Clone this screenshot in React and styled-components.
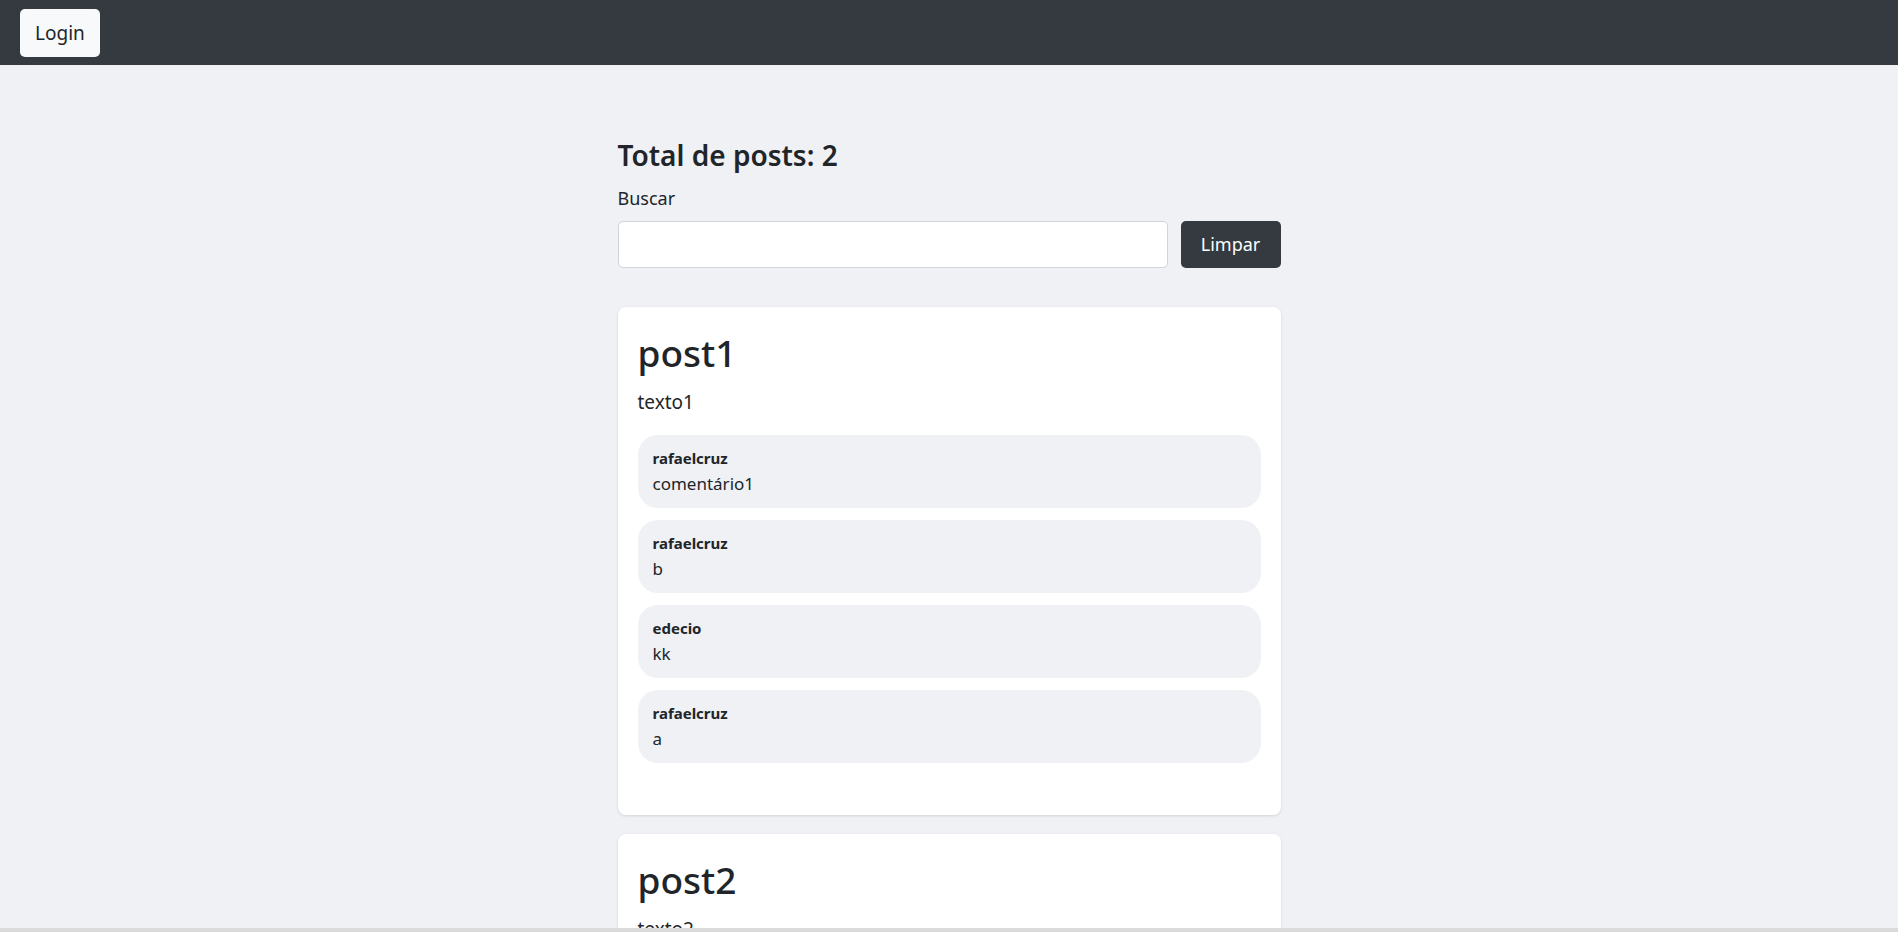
import React, { useState } from 'react'
import styled, { createGlobalStyle } from 'styled-components'

const posts = [
    {
        id: 1,
        title: 'post1',
        text: 'texto1',
        comments: [
            { user: 'rafaelcruz', body: 'comentário1' },
            { user: 'rafaelcruz', body: 'b' },
            { user: 'edecio', body: 'kk' },
            { user: 'rafaelcruz', body: 'a' },
        ],
    },
    { id: 2, title: 'post2', text: 'texto2', comments: [] },
]

const App = () => {
    const [search, setSearch] = useState('')

    return (
        <>
            <GlobalStyle />
            <Navbar>
                <LoginButton>Login</LoginButton>
            </Navbar>
            <Main>
                <Total>Total de posts: {posts.length}</Total>
                <Label htmlFor="busca">Buscar</Label>
                <SearchRow>
                    <SearchInput id="busca" value={search} onChange={e => setSearch(e.target.value)} />
                    <ClearButton onClick={() => setSearch('')}>Limpar</ClearButton>
                </SearchRow>
                <PostList>
                    {posts.map(post => (
                        <Card key={post.id}>
                            <PostTitle>{post.title}</PostTitle>
                            <PostText>{post.text}</PostText>
                            <Comments>
                                {post.comments.map((c, i) => (
                                    <Comment key={i}>
                                        <Author>{c.user}</Author>
                                        <CommentText>{c.body}</CommentText>
                                    </Comment>
                                ))}
                            </Comments>
                        </Card>
                    ))}
                </PostList>
            </Main>
            <ScrollStrip />
        </>
    )
}

const GlobalStyle = createGlobalStyle`
    * {
        box-sizing: border-box;
    }
    body {
        margin: 0;
        background: #eff1f5;
        color: #212529;
        font-family: "Noto Sans", "Open Sans", sans-serif;
        font-size: 16px;
        line-height: 1.5;
    }
`;

const Navbar = styled.nav`
    height: 65px;
    background: #343a40;
    display: flex;
    align-items: center;
    padding: 0 20px;
`;

const LoginButton = styled.button`
    height: 48px;
    padding: 0 15px;
    border: none;
    border-radius: 5px;
    background: #f8f9fa;
    color: #212529;
    font-family: inherit;
    font-size: 19px;
`;

const Main = styled.main`
    width: 663px;
    margin: 0 auto;
    padding-top: 74px;
`;

const Total = styled.h4`
    margin: 0 0 12px;
    font-size: 28px;
    font-weight: 600;
    line-height: 1.2;
`;

const Label = styled.label`
    display: block;
    margin-bottom: 10px;
    font-size: 18px;
    line-height: 26px;
`;

const SearchRow = styled.div`
    display: flex;
    gap: 13px;
`;

const SearchInput = styled.input`
    flex: 1;
    height: 47px;
    border: 1px solid #ced4da;
    border-radius: 5px;
    background: #fff;
    padding: 0 16px;
    font-family: inherit;
    font-size: 18px;
`;

const ClearButton = styled.button`
    width: 100px;
    height: 47px;
    border: none;
    border-radius: 5px;
    background: #343a40;
    color: #fff;
    font-family: inherit;
    font-size: 18px;
`;

const PostList = styled.div`
    display: flex;
    flex-direction: column;
    gap: 19px;
    margin-top: 39px;
`;

const Card = styled.div`
    background: #fff;
    border-radius: 8px;
    box-shadow: 0 1px 3px rgba(0, 0, 0, 0.12);
    padding: 22px 20px 52px;
`;

const PostTitle = styled.h1`
    margin: 0 0 12px;
    font-size: 37px;
    font-weight: 500;
    line-height: 48px;
`;

const PostText = styled.p`
    margin: 0 0 20px;
    font-size: 19px;
    line-height: 26px;
`;

const Comments = styled.div`
    display: flex;
    flex-direction: column;
    gap: 12px;
`;

const Comment = styled.div`
    background: #eff1f5;
    border-radius: 20px;
    padding: 13px 15px 12px;
`;

const Author = styled.div`
    font-size: 15px;
    font-weight: 700;
    line-height: 21px;
    margin-bottom: 3px;
`;

const CommentText = styled.div`
    font-size: 17px;
    line-height: 24px;
`;

const ScrollStrip = styled.div`
    position: fixed;
    left: 0;
    right: 0;
    bottom: 0;
    height: 4px;
    background: #dadada;
`;

export default App
